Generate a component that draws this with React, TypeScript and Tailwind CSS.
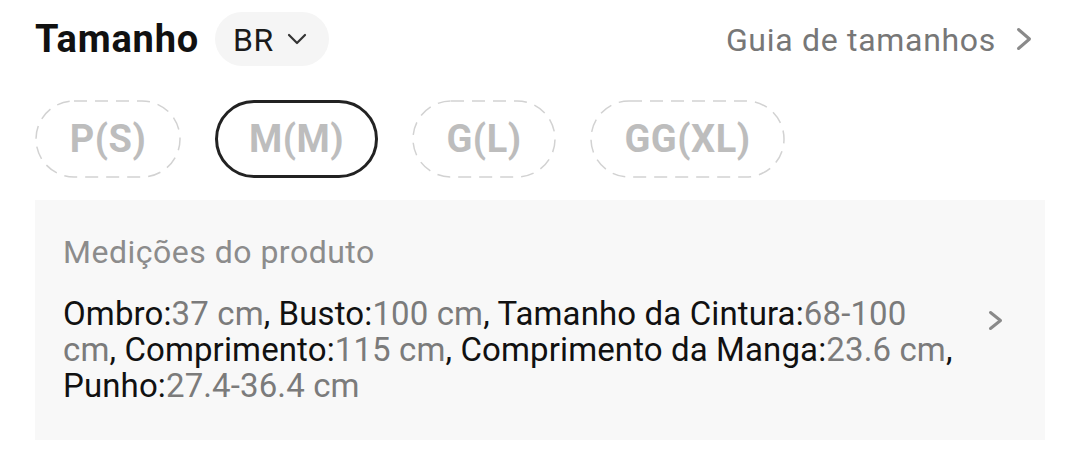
const sizes = [
  { label: "P(S)", w: "w-[146px]", width: 146, selected: false },
  { label: "M(M)", w: "w-[163px]", width: 163, selected: true },
  { label: "G(L)", w: "w-[144px]", width: 144, selected: false },
  { label: "GG(XL)", w: "w-[195px]", width: 195, selected: false },
];

const medidas = [
  { k: "Ombro", v: "37 cm" },
  { k: "Busto", v: "100 cm" },
  { k: "Tamanho da Cintura", v: "68-100 cm" },
  { k: "Comprimento", v: "115 cm" },
  { k: "Comprimento da Manga", v: "23.6 cm" },
  { k: "Punho", v: "27.4-36.4 cm" },
];

function Chevron({ w, h, stroke, color }: { w: number; h: number; stroke: number; color: string }) {
  return (
    <svg width={w} height={h} viewBox={`0 0 ${w} ${h}`} fill="none">
      <polyline
        points={`${stroke / 2 + 1},${stroke / 2 + 1} ${w - stroke / 2 - 1},${h / 2} ${stroke / 2 + 1},${h - stroke / 2 - 1}`}
        stroke={color}
        strokeWidth={stroke}
        strokeLinecap="round"
        strokeLinejoin="round"
      />
    </svg>
  );
}

export default function App() {
  return (
    <div className="w-[1080px] h-[464px] bg-white font-['Roboto',sans-serif] px-[35px] pt-[12px]">
      {/* cabecalho */}
      <div className="flex items-center justify-between h-[54px]">
        <div className="flex items-center gap-[16px]">
          <span className="text-[38px] leading-[54px] font-bold text-[#111] tracking-[0.8px]">Tamanho</span>
          <button className="flex items-center gap-[13px] h-[54px] pl-[18px] pr-[22px] rounded-full bg-[#f5f5f5] text-[#1a1a1a]">
            <span className="text-[32px] leading-[54px] tracking-[0.6px] mt-[2px]">BR</span>
            <svg width="20" height="12" viewBox="0 0 20 12" fill="none">
              <polyline points="2,2 10,10 18,2" stroke="#333" strokeWidth="2.2" strokeLinecap="round" strokeLinejoin="round" />
            </svg>
          </button>
        </div>
        <div className="flex items-center gap-[20px] pr-[13px] text-[#777]">
          <span className="text-[32px] leading-[54px] tracking-[0.7px] mt-[2px]">Guia de tamanhos</span>
          <Chevron w={16} h={24} stroke={3} color="#8a8a8a" />
        </div>
      </div>

      {/* tamanhos */}
      <div className="flex gap-[34px] mt-[34px]">
        {sizes.map((s) => (
          <div
            key={s.label}
            className={`relative ${s.w} h-[78px] rounded-full flex items-center justify-center text-[38px] font-bold text-[#bdbdbd] tracking-[0.5px] ${
              s.selected ? "border-[3px] border-[#222]" : ""
            }`}
          >
            {!s.selected && (
              <svg className="absolute inset-0" width={s.width} height={78}>
                <rect
                  x="1"
                  y="1"
                  width={s.width - 2}
                  height={76}
                  rx="38"
                  fill="none"
                  stroke="#d2d2d2"
                  strokeWidth="1.5"
                  strokeDasharray="13 8"
                />
              </svg>
            )}
            <span className="relative">{s.label}</span>
          </div>
        ))}
      </div>

      {/* medicoes */}
      <div className="mt-[22px] h-[240px] w-[1010px] bg-[#f8f8f8] flex items-center justify-between pl-[28px] pr-[42px]">
        <div className="h-full pt-[34px]">
          <div className="text-[32px] text-[#8c8c8c] leading-[36px] tracking-[0.5px]">Medições do produto</div>
          <p className="mt-[26px] w-[895px] text-[33px] leading-[36px] tracking-[0.12px] text-[#111]">
            {medidas.map((m, i) => (
              <span key={m.k}>
                {m.k}:<span className="text-[#7b7b7b]">{m.v}</span>
                {i < medidas.length - 1 ? ", " : ""}
              </span>
            ))}
          </p>
        </div>
        <Chevron w={15} h={21} stroke={3} color="#8a8a8a" />
      </div>
    </div>
  );
}
